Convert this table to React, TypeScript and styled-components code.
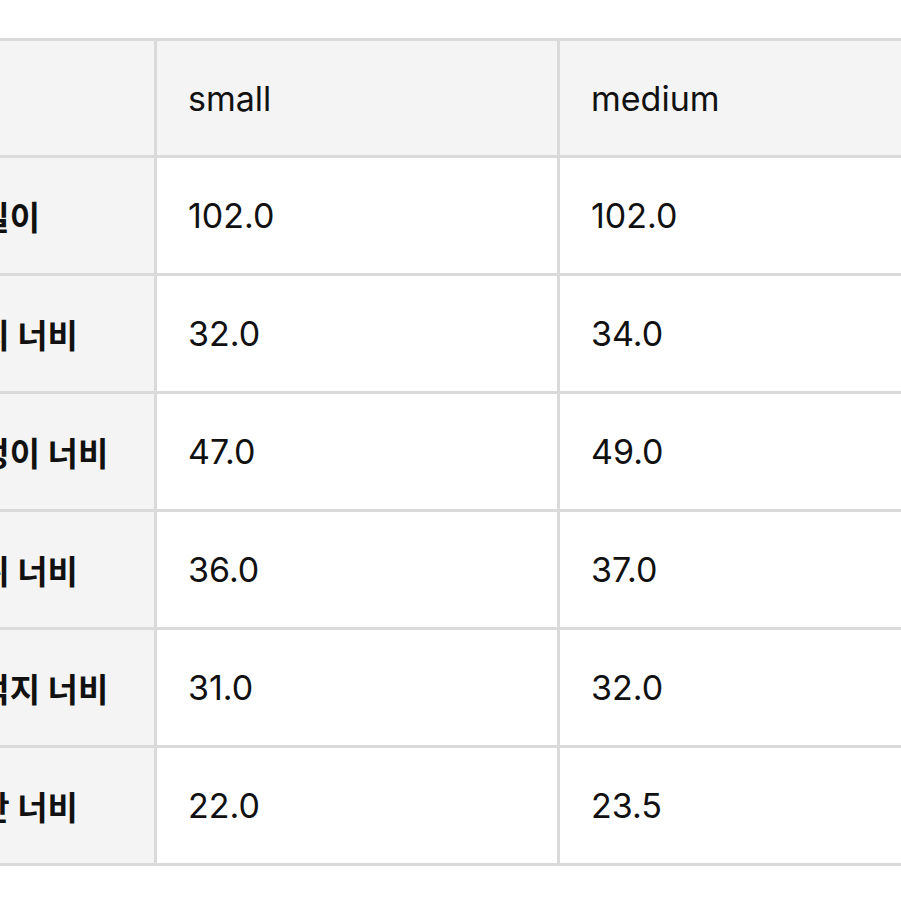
import React from "react";
import styled, { createGlobalStyle } from "styled-components";

const Global = createGlobalStyle`
  html, body {
    margin: 0;
    padding: 0;
    background: #ffffff;
    overflow: hidden;
  }
`;

const Page = styled.div`
  width: 901px;
  height: 901px;
  overflow: hidden;
  background: #ffffff;
`;

const Grid = styled.div`
  display: grid;
  grid-template-columns: 240px 400px 400px;
  grid-template-rows: 114px repeat(6, 115px);
  gap: 3px;
  padding: 3px;
  width: max-content;
  margin: 38px 0 0 -89px;
  background: #dadada;
`;

const Cell = styled.div<{ $shade?: boolean; $label?: boolean }>`
  display: flex;
  align-items: center;
  padding: 0 0 0 ${(p) => (p.$label ? "35px" : "31px")};
  background: ${(p) => (p.$shade ? "#f4f4f4" : "#ffffff")};
  color: #111111;
  font-family: ${(p) =>
    p.$label
      ? '"Noto Sans CJK KR", "Noto Sans", sans-serif'
      : 'Inter, "Liberation Sans", sans-serif'};
  font-size: ${(p) => (p.$label ? "33px" : "34px")};
  font-weight: ${(p) => (p.$label ? 700 : 400)};
  white-space: nowrap;
  overflow: hidden;
`;

const rows: [string, string, string][] = [
  ["총길이", "102.0", "102.0"],
  ["허리 너비", "32.0", "34.0"],
  ["엉덩이 너비", "47.0", "49.0"],
  ["밑위 너비", "36.0", "37.0"],
  ["허벅지 너비", "31.0", "32.0"],
  ["밑단 너비", "22.0", "23.5"],
];

export default function App() {
  return (
    <Page>
      <Global />
      <Grid>
        <Cell $shade />
        <Cell $shade>small</Cell>
        <Cell $shade>medium</Cell>
        {rows.map(([label, s, m]) => (
          <React.Fragment key={label}>
            <Cell $shade $label>
              {label}
            </Cell>
            <Cell>{s}</Cell>
            <Cell>{m}</Cell>
          </React.Fragment>
        ))}
      </Grid>
    </Page>
  );
}
